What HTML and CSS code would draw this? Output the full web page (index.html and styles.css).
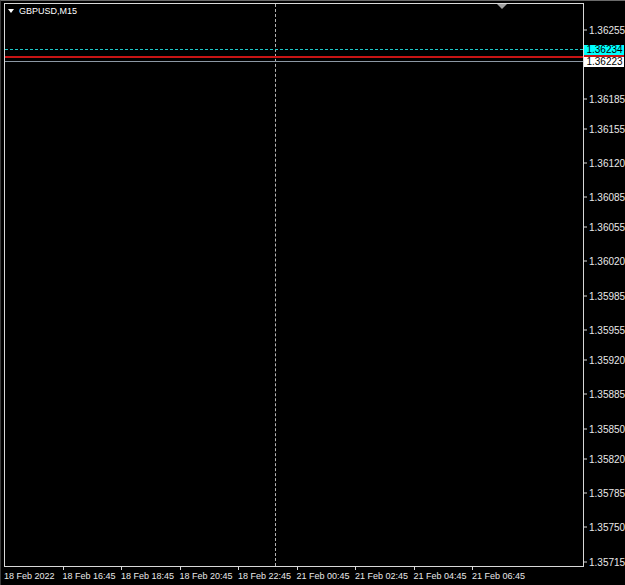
FILE: index.html
```html
<!DOCTYPE html>
<html lang="en">

<head>
    <meta charset="UTF-8">
    <title>GBPUSD,M15</title>
    <link rel="stylesheet" href="styles.css">
</head>

<body>
    <div class="window">
        <div class="chart">
            <div class="title"><span class="arrow"></span>GBPUSD,M15</div>
            <div class="shift"></div>
            <div class="cross"></div>
            <div class="level ask"></div>
            <div class="level bid"></div>
            <div class="level last"></div>
        </div>

        <!-- price scale -->
        <div class="prices">
            <div class="price" style="top:29px">1.36255</div>
            <div class="price" style="top:98px">1.36185</div>
            <div class="price" style="top:128px">1.36155</div>
            <div class="price" style="top:162px">1.36120</div>
            <div class="price" style="top:196px">1.36085</div>
            <div class="price" style="top:226px">1.36055</div>
            <div class="price" style="top:260px">1.36020</div>
            <div class="price" style="top:295px">1.35985</div>
            <div class="price" style="top:329px">1.35955</div>
            <div class="price" style="top:359px">1.35920</div>
            <div class="price" style="top:393px">1.35885</div>
            <div class="price" style="top:428px">1.35850</div>
            <div class="price" style="top:458px">1.35820</div>
            <div class="price" style="top:492px">1.35785</div>
            <div class="price" style="top:526px">1.35750</div>
            <div class="price" style="top:561px">1.35715</div>
            <div class="tag tag-ask" style="top:44px">1.36234</div>
            <div class="tag tag-bid" style="top:54px">1.36223</div>
        </div>

        <!-- time scale -->
        <div class="times">
            <div class="time first">18 Feb 2022</div>
            <div class="time">18 Feb 16:45</div>
            <div class="time">18 Feb 18:45</div>
            <div class="time">18 Feb 20:45</div>
            <div class="time">18 Feb 22:45</div>
            <div class="time">21 Feb 00:45</div>
            <div class="time">21 Feb 02:45</div>
            <div class="time">21 Feb 04:45</div>
            <div class="time">21 Feb 06:45</div>
        </div>
    </div>
</body>

</html>
```

FILE: styles.css
```css
body {
    margin: 0;
    background-color: #000000;
    font-family: 'Liberation Sans', Arial, sans-serif;
    font-size: 9px;
    color: #ffffff;
}

.window {
    position: relative;
    width: 624px;
    height: 584px;
    border-top: 1px solid #6a6a6a;
    border-left: 1px solid #3a3a3a;
    background-color: #000000;
}

.chart {
    position: absolute;
    left: 3px;
    top: 2px;
    width: 578px;
    height: 562px;
    border: 1px solid #d8d8d8;
}

.title {
    position: absolute;
    left: 3px;
    top: 2px;
    display: flex;
    align-items: center;
    gap: 5px;
    font-size: 9px;
    color: #ffffff;
}

.arrow {
    width: 0;
    height: 0;
    border-left: 3px solid transparent;
    border-right: 3px solid transparent;
    border-top: 4px solid #ffffff;
}

.shift {
    position: absolute;
    left: 492px;
    top: 0;
    width: 0;
    height: 0;
    border-left: 5px solid transparent;
    border-right: 5px solid transparent;
    border-top: 5px solid #a0a0a0;
}

.cross {
    position: absolute;
    left: 270px;
    top: 0;
    bottom: 0;
    border-left: 1px dashed #b4b4b4;
}

.level {
    position: absolute;
    left: 0;
    right: 0;
}

.ask {
    top: 45px;
    border-top: 1px dashed #1fc8c8;
}

.bid {
    top: 52px;
    height: 2px;
    background-color: #c81414;
}

.last {
    top: 57px;
    border-top: 1px solid #8c98a4;
}

.prices {
    position: absolute;
    left: 583px;
    top: 0;
    width: 41px;
    height: 570px;
    font-size: 10px;
}

.price {
    position: absolute;
    left: 5px;
    transform: translateY(-50%);
    line-height: 11px;
    color: #e8e8e8;
}

.price::before {
    content: "";
    position: absolute;
    left: -5px;
    top: 5px;
    width: 3px;
    border-top: 1px solid #d8d8d8;
}

.tag {
    position: absolute;
    left: 0;
    width: 39px;
    height: 10px;
    line-height: 10px;
    padding-left: 1px;
    color: #000000;
    text-align: center;
}

.tag-ask {
    background-color: #00ffff;
}

.tag-bid {
    height: 10px;
    background-color: #ffffff;
    border-top: 2px solid #c81414;
}

.times {
    position: absolute;
    left: 3px;
    top: 570px;
    display: flex;
    color: #e8e8e8;
}

.time {
    position: relative;
    width: 58.5px;
    line-height: 11px;
    white-space: nowrap;
}

.time::before {
    content: "";
    position: absolute;
    left: 0;
    top: -4px;
    height: 3px;
    border-left: 1px solid #d8d8d8;
}

.first::before {
    display: none;
}
```
